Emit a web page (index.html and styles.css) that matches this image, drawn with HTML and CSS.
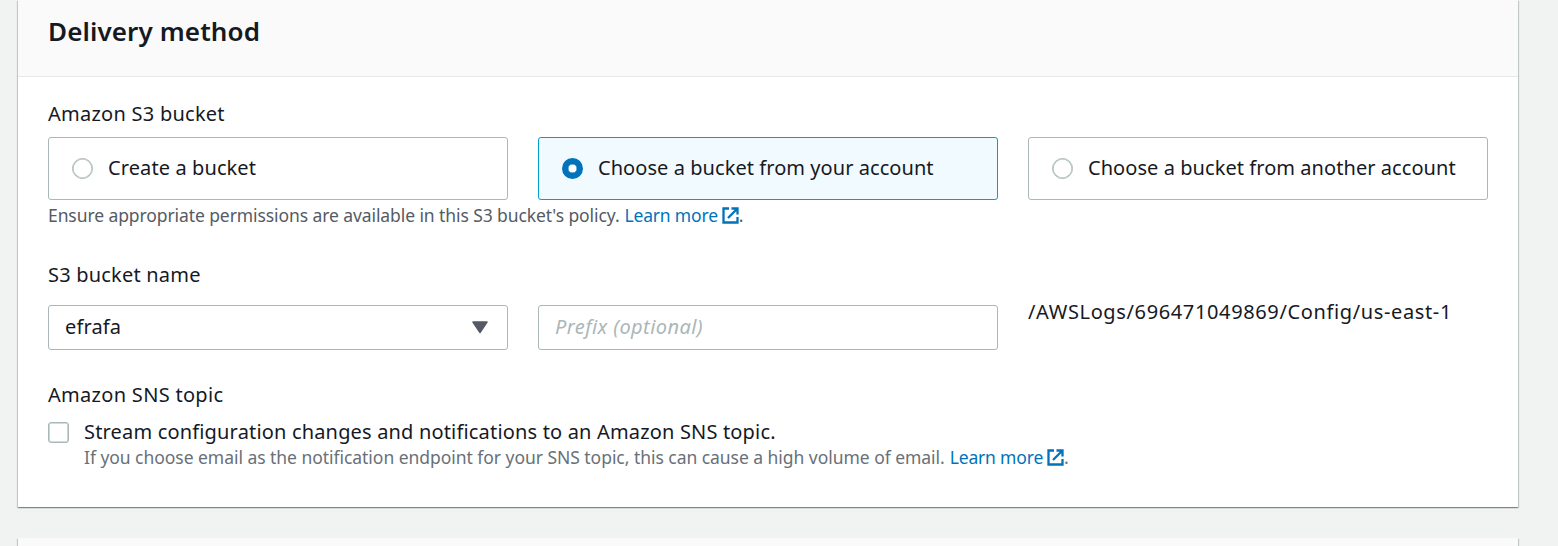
FILE: index.html
```html
<!DOCTYPE html>
<html lang="en">
<head>
<meta charset="utf-8">
<title>Delivery method</title>
<link rel="stylesheet" href="styles.css">
</head>
<body>
<main class="page">
  <section class="panel">
    <header class="panel-header"><h2 class="title"><span class="t-title">Delivery method</span></h2></header>
    <div class="panel-body">
      <div class="label"><span class="t-bucket">Amazon S3 bucket</span></div>
      <div class="columns">
        <label class="tile"><span class="radio"></span><span class="t-create">Create a bucket</span></label>
        <label class="tile selected"><span class="radio"></span><span class="t-own">Choose a bucket from your account</span></label>
        <label class="tile"><span class="radio"></span><span class="t-other">Choose a bucket from another account</span></label>
      </div>
      <p class="hint"><span class="t-ensure">Ensure appropriate permissions are available in this S3 bucket's policy.</span><a class="link"><span class="t-learn">Learn more</span><svg class="external" viewBox="0 0 17 17"><path d="M7 1.5H1.5V15.5H15.5V10M9.5 1.5H15.5V7.5M15 2L6 11"/></svg></a>.</p>
      <div class="label name-label"><span class="t-name">S3 bucket name</span></div>
      <div class="columns">
        <div class="field"><span class="t-value">efrafa</span><svg class="caret" viewBox="0 0 16 13"><path d="M1 1H15L8 11.5Z"/></svg></div>
        <div class="field placeholder"><span class="t-prefix">Prefix (optional)</span></div>
        <div class="path"><span class="t-path">/AWSLogs/696471049869/Config/us-east-1</span></div>
      </div>
      <div class="label sns-label"><span class="t-sns">Amazon SNS topic</span></div>
      <div class="check-row">
        <span class="checkbox"></span>
        <div class="check-text">
          <div class="check-label"><span class="t-stream">Stream configuration changes and notifications to an Amazon SNS topic.</span></div>
          <p class="hint light"><span class="t-email">If you choose email as the notification endpoint for your SNS topic, this can cause a high volume of email.</span><a class="link"><span class="t-learn">Learn more</span><svg class="external" viewBox="0 0 17 17"><path d="M7 1.5H1.5V15.5H15.5V10M9.5 1.5H15.5V7.5M15 2L6 11"/></svg></a>.</p>
        </div>
      </div>
    </div>
  </section>
  <section class="panel next"></section>
</main>
</body>
</html>
```
FILE: styles.css
```css
* { box-sizing: border-box; }
body { margin: 0; background: #f1f3f3; color: #16191f; font: 20px/30px "Noto Sans", "Open Sans", sans-serif; }
.page { height: 546px; overflow: hidden; padding: 0 40px 0 18px; }
.panel { height: 507px; background: #fff; box-shadow: 0 1px 1px rgba(0,28,36,.3), 1px 1px 1px rgba(0,28,36,.15), -1px 1px 1px rgba(0,28,36,.15); }
.panel.next { margin-top: 31px; background: #fafafa; }
.panel-header { height: 77px; padding: 15px 30px; background: #fafafa; border-bottom: 1px solid #e6e9ea; }
.title { margin: 0; font-size: 26px; line-height: 32px; font-weight: 600; letter-spacing: .12px; }
.panel-body { padding: 22px 30px 0; }
.label { height: 38px; white-space: nowrap; }
.columns { display: grid; grid-template-columns: repeat(3, 460px); gap: 30px; }
.tile { height: 63px; display: flex; align-items: center; gap: 15px; padding: 0 23px; border: 1px solid #aab7b8; border-radius: 3px; white-space: nowrap; letter-spacing: .06px; }
.tile span:last-child { padding-bottom: 2px; }
.selected { background: #f1faff; border-color: #00a1c9; }
.radio { width: 21px; height: 21px; flex: none; border: 1px solid #aab7b8; border-radius: 50%; background: #fff; box-shadow: inset 0 0 0 .6px #aab7b8; }
.selected .radio { border: 6px solid #0073bb; box-shadow: inset 0 0 0 .5px #0073bb; }
.hint { margin: 0; height: 31px; display: flex; align-items: center; font-size: 17.5px; line-height: 31px; color: #545b64; white-space: nowrap; }
.light { color: #687078; height: 24px; line-height: 24px; }
.link { display: flex; align-items: center; gap: 4px; margin-left: 5px; color: #0073bb; }
.external { width: 17px; height: 17px; fill: none; stroke: #0073bb; stroke-width: 2.3; }
.name-label { margin-top: 29px; height: 45px; }
.field { height: 45px; display: flex; align-items: center; justify-content: space-between; padding: 0 19px 1px 16px; border: 1px solid #aab7b8; border-radius: 3px; }
.placeholder { color: #aab7b8; font-style: italic; }
.caret { width: 16px; height: 13px; fill: #545b64; stroke: #545b64; stroke-width: 1.5; stroke-linejoin: round; }
.path { line-height: 14px; white-space: nowrap; }
.sns-label { margin-top: 30px; height: 37px; }
.check-row { display: flex; gap: 15px; }
.checkbox { width: 21px; height: 21px; margin-top: 5px; border: 1px solid #aab7b8; border-radius: 3px; box-shadow: inset 0 0 0 .6px #aab7b8; }
.check-label { height: 28px; white-space: nowrap; }
.t-bucket { letter-spacing: .25px; }
.t-create { letter-spacing: .1px; }
.t-ensure { letter-spacing: -.09px; }
.t-learn { letter-spacing: -.18px; }
.t-name { letter-spacing: .2px; }
.t-value { letter-spacing: .15px; }
.t-prefix { letter-spacing: .42px; }
.t-path { letter-spacing: .63px; }
.t-sns { letter-spacing: .3px; }
.t-stream { letter-spacing: .17px; }
.t-email { letter-spacing: -.04px; }
```
